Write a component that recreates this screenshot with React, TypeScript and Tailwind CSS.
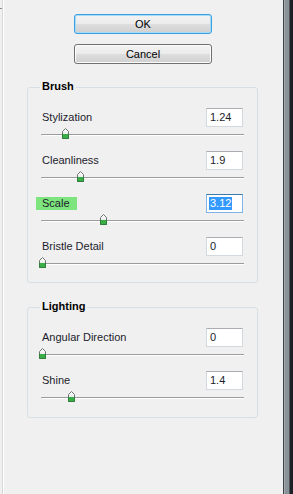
import React from "react";

type Row = { label: string; value: string; thumb: number; active?: boolean };

const brush: Row[] = [
  { label: "Stylization", value: "1.24", thumb: 62 },
  { label: "Cleanliness", value: "1.9", thumb: 77 },
  { label: "Scale", value: "3.12", thumb: 100, active: true },
  { label: "Bristle Detail", value: "0", thumb: 39 },
];

const lighting: Row[] = [
  { label: "Angular Direction", value: "0", thumb: 39 },
  { label: "Shine", value: "1.4", thumb: 68 },
];

function Thumb({ left }: { left: number }) {
  return (
    <svg
      width="7"
      height="11"
      viewBox="0 0 7 11"
      className="absolute top-0"
      style={{ left }}
    >
      <defs>
        <linearGradient id="thumbg" x1="0" y1="0" x2="0" y2="1">
          <stop offset="0" stopColor="#ffffff" />
          <stop offset="1" stopColor="#dcdcdc" />
        </linearGradient>
      </defs>
      <path d="M3.5 0.5 L6.5 3.5 V10.5 H0.5 V3.5 Z" fill="url(#thumbg)" stroke="#6c7670" />
      <rect x="1" y="6" width="5" height="4" fill="#3aad47" />
      <path d="M0.5 6 V10.5 H6.5 V6" fill="none" stroke="#2f7f3a" />
    </svg>
  );
}

function SliderRow({ row }: { row: Row }) {
  return (
    <div>
      <div className="flex items-center justify-between h-[19px]">
        {row.active ? (
          <span className="-ml-[6px] pl-[6px] w-[41px] h-[13px] leading-[13px] bg-[#7ee57e]">
            {row.label}
          </span>
        ) : (
          <span className="leading-[13px]">{row.label}</span>
        )}
        {row.active ? (
          <div className="w-[37px] h-[19px] border border-[#7eb4ea] border-t-[#3d7bad] bg-white flex items-center pl-[2px]">
            <span className="bg-[#3399ff] text-white leading-[13px] px-px">{row.value}</span>
          </div>
        ) : (
          <div className="w-[37px] h-[19px] border border-[#d3d8de] border-t-[#abadb3] bg-white flex items-center pl-[3px]">
            <span className="leading-[13px]">{row.value}</span>
          </div>
        )}
      </div>
      <div className="relative mt-px h-[12px] -ml-px -mr-px pt-[6px]">
        <div className="h-[2px] border-t border-[#9c9c9c] border-b border-b-white rounded-l-[2px] border-l border-l-[#b0b0b0]" />
        <Thumb left={row.thumb - 41} />
      </div>
    </div>
  );
}

function Group({ title, rows, pb }: { title: string; rows: Row[]; pb: string }) {
  return (
    <div className={`relative ml-[23px] w-[231px] border border-[#d5dfe5] rounded-[3px] pt-[20px] px-[14px] ${pb}`}>
      <span className="absolute -top-[8px] left-[12px] px-[2px] bg-[#f0f0f0] font-bold leading-[13px] text-black">
        {title}
      </span>
      <div className="flex flex-col gap-[11px]">
        {rows.map((r) => (
          <SliderRow key={r.label} row={r} />
        ))}
      </div>
    </div>
  );
}

export default function App() {
  return (
    <div
      className="flex w-[293px] h-[494px] bg-[#f0f0f0] text-[11px] text-[#1c1c2c] overflow-hidden"
      style={{ fontFamily: '"Liberation Sans", Arial, sans-serif' }}
    >
      {/* left edge */}
      <div className="flex w-[4px] h-full shrink-0">
        <div className="w-[2px] flex flex-col">
          <div className="mt-[8px] h-px bg-[#8a8a8a]" />
        </div>
        <div className="w-px bg-[#d8d8d8]" />
        <div className="w-px bg-white" />
      </div>

      {/* main */}
      <div className="flex-1 flex flex-col pt-[14px]">
        <div className="ml-[70px] w-[138px] flex flex-col gap-[10px]">
          <button className="h-[20px] rounded-[3px] border border-[#3c9fe0] shadow-[inset_0_0_0_1px_#a6dbf7] bg-[linear-gradient(to_bottom,#f3f3f3_0%,#ebebeb_50%,#dedede_50%,#d0d0d0_100%)] text-[11px] text-black leading-[13px]">
            OK
          </button>
          <button className="h-[20px] rounded-[3px] border border-[#707070] shadow-[inset_0_0_0_1px_#fcfcfc] bg-[linear-gradient(to_bottom,#f3f3f3_0%,#ebebeb_50%,#dedede_50%,#d0d0d0_100%)] text-[11px] text-black leading-[13px]">
            Cancel
          </button>
        </div>
        <div className="mt-[23px]">
          <Group title="Brush" rows={brush} pb="pb-[13px]" />
        </div>
        <div className="mt-[24px]">
          <Group title="Lighting" rows={lighting} pb="pb-[14px]" />
        </div>
      </div>

      {/* right frame */}
      <div className="flex w-[10px] h-full shrink-0">
        <div className="w-px bg-[#3c4248]" />
        <div className="w-px bg-[#a3aab0]" />
        <div className="w-[4px] bg-[#8a9299]" />
        <div className="w-px bg-[#50575d]" />
        <div className="w-[3px] bg-[#1d2125]" />
      </div>
    </div>
  );
}
